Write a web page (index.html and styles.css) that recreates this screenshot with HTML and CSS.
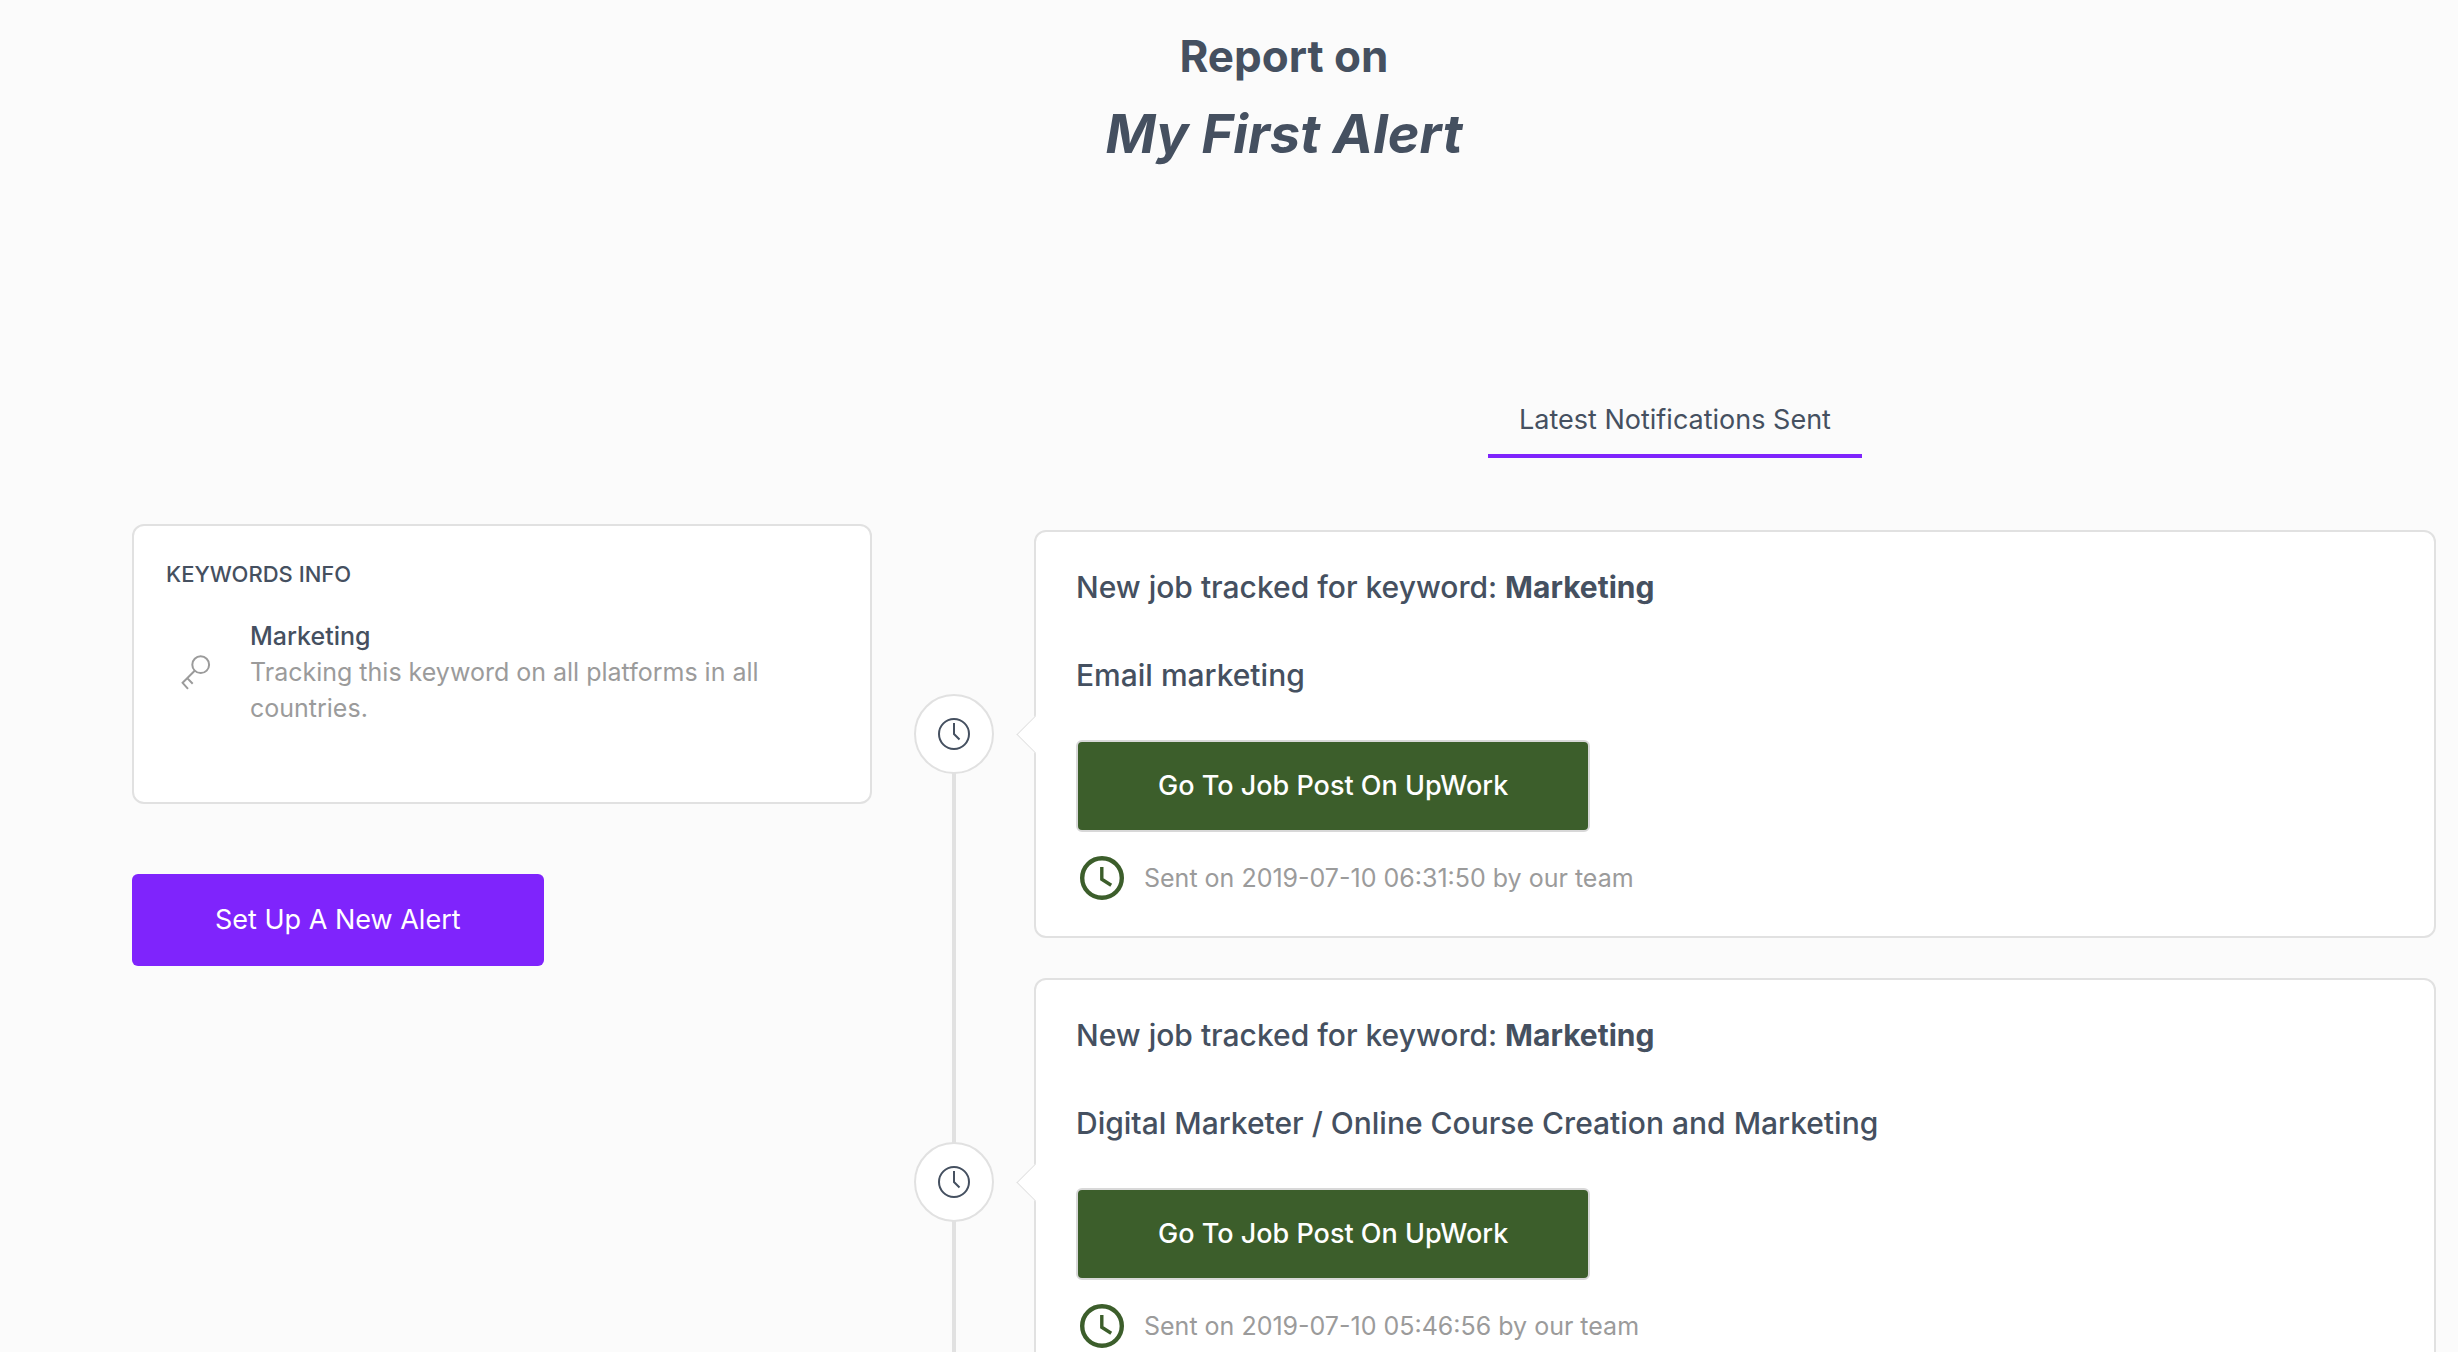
FILE: index.html
```html
<!DOCTYPE html>
<html lang="en">
<head>
<meta charset="utf-8">
<meta name="viewport" content="width=device-width, initial-scale=1">
<title>Report on My First Alert</title>
<link rel="stylesheet" href="styles.css">
</head>
<body>
<svg class="sprite" aria-hidden="true">
  <symbol id="clock-thin" viewBox="0 0 32 32">
    <circle cx="16" cy="16" r="15" fill="none" stroke="currentColor" stroke-width="2"/>
    <path d="M16 5v11l5.5 5.5" fill="none" stroke="currentColor" stroke-width="2"/>
  </symbol>
  <symbol id="clock-bold" viewBox="0 0 52 52">
    <circle cx="26" cy="26" r="19.8" fill="none" stroke="currentColor" stroke-width="4.4"/>
    <path d="M25.8 15v12.2l9.4 6" fill="none" stroke="currentColor" stroke-width="3.4"/>
  </symbol>
</svg>
<main class="page">
  <header class="heading">
    <h1 class="heading-label">Report on</h1>
    <h2 class="heading-name">My First Alert</h2>
  </header>
  <div class="columns">
    <aside class="sidebar">
      <section class="panel">
        <h3 class="panel-title">KEYWORDS INFO</h3>
        <div class="keyword">
          <svg class="keyword-icon" viewBox="0 0 60 60" aria-hidden="true">
            <g fill="none" stroke="currentColor" stroke-width="2">
              <circle cx="34.7" cy="22.7" r="8.4"/>
              <path d="M28.7 28.7L16.6 40.8l5.4 6M21.3 36.1l5.4 5.6"/>
            </g>
          </svg>
          <div class="keyword-text">
            <h4 class="keyword-name">Marketing</h4>
            <p class="keyword-note">Tracking this keyword on all platforms in all countries.</p>
          </div>
        </div>
      </section>
      <button class="btn btn-new" type="button">Set Up A New Alert</button>
    </aside>
    <section class="feed">
      <nav class="tabs"><a class="tab" href="#latest">Latest Notifications Sent</a></nav>
      <ol class="timeline" id="latest">
        <li class="entry">
          <span class="marker"><svg class="marker-icon" aria-hidden="true"><use href="#clock-thin"/></svg></span>
          <article class="card">
            <h3 class="card-title">New job tracked for keyword: <strong>Marketing</strong></h3>
            <p class="card-job">Email marketing</p>
            <a class="btn btn-job" href="#job-1">Go To Job Post On UpWork</a>
            <p class="sent"><svg class="sent-icon" aria-hidden="true"><use href="#clock-bold"/></svg><span>Sent on 2019-07-10 06:31:50 by our team</span></p>
          </article>
        </li>
        <li class="entry">
          <span class="marker"><svg class="marker-icon" aria-hidden="true"><use href="#clock-thin"/></svg></span>
          <article class="card">
            <h3 class="card-title">New job tracked for keyword: <strong>Marketing</strong></h3>
            <p class="card-job">Digital Marketer / Online Course Creation and Marketing</p>
            <a class="btn btn-job" href="#job-2">Go To Job Post On UpWork</a>
            <p class="sent"><svg class="sent-icon" aria-hidden="true"><use href="#clock-bold"/></svg><span>Sent on 2019-07-10 05:46:56 by our team</span></p>
          </article>
        </li>
      </ol>
    </section>
  </div>
</main>
</body>
</html>
```

FILE: styles.css
```css
:root {
  --ink: #455060;
  --muted: #9b9b9b;
  --line: #e1e1e1;
  --purple: #7f24fc;
  --green: #3c5e2b;
}

* { box-sizing: border-box; }

body {
  margin: 0;
  background: #fbfbfb;
  color: var(--ink);
  font-family: Inter, "Liberation Sans", sans-serif;
  font-size: 25px;
  line-height: 36px;
}

h1, h2, h3, h4, p, ol { margin: 0; padding: 0; font-weight: 500; }

.sprite { position: absolute; width: 0; height: 0; }

.page { padding: 24px 22px 0 132px; }

.heading { text-align: center; margin-bottom: 230px; }
.heading-label { font-size: 44px; line-height: 64px; font-weight: 700; margin-bottom: 10px; }
.heading-name { font-size: 54px; line-height: 72px; font-weight: 700; font-style: italic; }

.columns {
  display: grid;
  grid-template-columns: 740fr 1522fr;
  gap: 42px;
  align-items: start;
}

.sidebar { padding-top: 124px; }

.panel {
  background: #fff;
  border: 2px solid var(--line);
  border-radius: 12px;
  padding: 30px 32px 76px;
}
.panel-title { font-size: 22px; margin-bottom: 26px; }

.keyword { display: flex; align-items: center; gap: 24px; }
.keyword-icon { flex: none; width: 60px; height: 60px; color: var(--muted); }
.keyword-note { color: var(--muted); font-weight: 400; }

.btn {
  display: inline-block;
  border: 0;
  border-radius: 6px;
  color: #fff;
  font-family: inherit;
  font-size: 27px;
  line-height: 40px;
  text-align: center;
  text-decoration: none;
}
.btn-new { background: var(--purple); margin-top: 70px; padding: 26px 83px; }
.btn-job { background: var(--green); border: 2px solid #d8d8d8; padding: 24px 80px; }

.tabs { display: flex; justify-content: center; margin-bottom: 72px; }
.tab {
  border-bottom: 4px solid var(--purple);
  padding: 0 31px 14px;
  color: inherit;
  font-size: 27px;
  line-height: 40px;
  text-decoration: none;
}

.timeline { list-style: none; }
.entry {
  position: relative;
  display: flex;
  align-items: center;
  gap: 40px;
  margin-bottom: 40px;
}
/* connector running from this marker to the next one */
.entry::before {
  content: "";
  position: absolute;
  left: 38px;
  top: 50%;
  width: 4px;
  height: calc(100% + 40px);
  background: var(--line);
}

.marker {
  position: relative;
  flex: none;
  display: flex;
  align-items: center;
  justify-content: center;
  width: 80px;
  height: 80px;
  background: #fff;
  border: 2px solid var(--line);
  border-radius: 50%;
}
.marker-icon { width: 32px; height: 32px; }

.card {
  position: relative;
  flex: 1;
  background: #fff;
  border: 2px solid var(--line);
  border-radius: 12px;
  padding: 34px 40px 32px;
}
.card::before {
  content: "";
  position: absolute;
  left: -14px;
  top: calc(50% - 13px);
  width: 26px;
  height: 26px;
  background: #fff;
  border: solid var(--line);
  border-width: 0 0 1px 1px;
  transform: rotate(45deg);
}
.card-title { font-size: 30px; line-height: 42px; margin-bottom: 46px; }
.card-title strong { font-weight: 700; }
.card-job { font-size: 30px; line-height: 42px; margin-bottom: 44px; }

.sent { display: flex; align-items: center; gap: 16px; margin-top: 20px; color: var(--muted); font-weight: 400; }
.sent-icon { width: 52px; height: 52px; color: var(--green); }
```
